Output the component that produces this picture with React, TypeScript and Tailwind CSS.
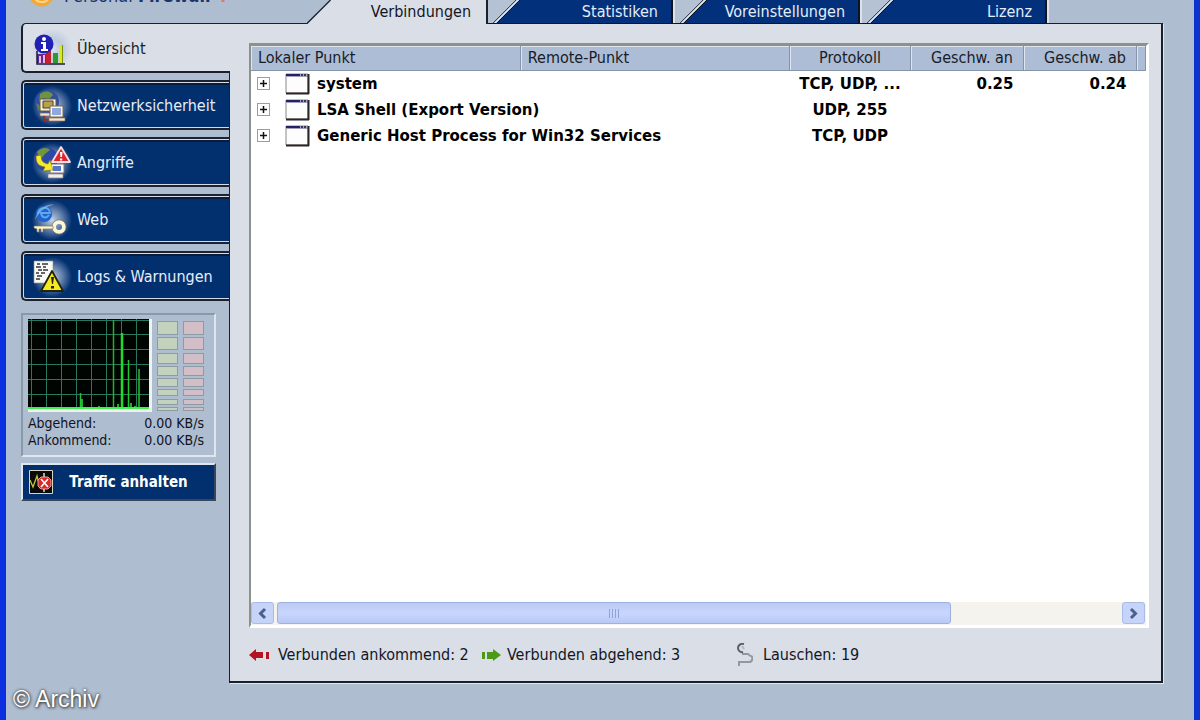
import type { ReactNode } from "react";
import clsx from "clsx";

interface NavItem {
  label: string;
  icon: ReactNode;
}

interface Connection {
  name: string;
  protocol: string;
  speedIn: string;
  speedOut: string;
}

const TABS = ["Statistiken", "Voreinstellungen", "Lizenz"];

const CONNECTIONS: Connection[] = [
  { name: "system", protocol: "TCP, UDP, ...", speedIn: "0.25", speedOut: "0.24" },
  { name: "LSA Shell (Export Version)", protocol: "UDP, 255", speedIn: "", speedOut: "" },
  { name: "Generic Host Process for Win32 Services", protocol: "TCP, UDP", speedIn: "", speedOut: "" },
];

const METER = ["h-[14px]", "h-[13px]", "h-[11px]", "h-[10px]", "h-[9px]", "h-[7px]", "h-[6px]", "h-[4px]"];

function Glow({ id }: { id: string }) {
  return (
    <>
      <defs>
        <radialGradient id={id}>
          <stop offset="0" stopColor="#dfe8f5" stopOpacity="0.9" />
          <stop offset="0.5" stopColor="#a9bbd8" stopOpacity="0.6" />
          <stop offset="1" stopColor="#a9bbd8" stopOpacity="0" />
        </radialGradient>
      </defs>
      <circle cx="21" cy="20" r="20" fill={`url(#${id})`} />
    </>
  );
}

function OverviewIcon() {
  return (
    <svg width="42" height="40" viewBox="0 0 42 40" aria-hidden="true">
      <Glow id="glow-overview" />
      <path d="M6 25h9v9H6z" fill="#5b2a9a" />
      <path d="M8 27h2v7H8zM12 26h2v8h-2z" fill="#e9b8dc" />
      <path d="M15 20h5v14h-5z" fill="#c8202c" />
      <path d="M22 24h5v10h-5z" fill="#2e9a2c" />
      <path d="M28 17l4-1v18h-4z" fill="#d8ea1c" />
      <path d="M31 16h1v18h-1z" fill="#7c8c10" />
      <circle cx="13" cy="15" r="9.500" fill="#2020b4" />
      <circle cx="13" cy="10" r="2" fill="#fff" />
      <path d="M10 13h5v7h2v2h-7v-2h2v-5h-2z" fill="#fff" />
      <path d="M6 22v13h28" fill="none" stroke="#1c1c3c" strokeWidth="1.500" />
    </svg>
  );
}

function NetworkIcon() {
  return (
    <svg width="42" height="40" viewBox="0 0 42 40" aria-hidden="true">
      <Glow id="glow-network" />
      <circle cx="16" cy="16" r="12" fill="#2f4fa4" />
      <path d="M9 8c5-4 11-3 13 1l-4 4-6-1-4 4z" fill="#6f9440" />
      <path d="M5 17l5 3 2 6-5-2z" fill="#5d8244" />
      <path d="M9 13h16v12H9z" fill="#f3eedc" stroke="#6b5a45" />
      <path d="M12 15h10v7H12z" fill="#b7a24c" stroke="#4c4022" />
      <path d="M9 27h10v3H9z" fill="#efe3cf" stroke="#8a6a55" strokeWidth="0.700" />
      <path d="M13 30v4h10" fill="none" stroke="#8c3328" strokeWidth="2" />
      <path d="M19 20h13v11H19z" fill="#fbf6ea" stroke="#77645a" />
      <path d="M21 22h9v7h-9z" fill="#8fa8e0" />
      <path d="M18 32h16v3H18z" fill="#f5e6d4" stroke="#8a6a55" strokeWidth="0.700" />
    </svg>
  );
}

function AttackIcon() {
  return (
    <svg width="42" height="40" viewBox="0 0 42 40" aria-hidden="true">
      <Glow id="glow-attack" />
      <circle cx="15" cy="16" r="12" fill="#2d48a8" />
      <path d="M6 9c4-5 11-5 13-2l-5 4-5 6z" fill="#70953e" />
      <path d="M19 21h14v9H19z" fill="#fbfbfb" stroke="#77727c" />
      <path d="M22 23h8v5h-8z" fill="#5676cc" />
      <path d="M17 31h15v4H17z" fill="#f0ece6" stroke="#8b7f86" strokeWidth="0.700" />
      <path d="M5 13c0 8 3 10 9 11l-2 4 10-1-3-10-2 4c-5-1-7-3-7-9z" fill="#f7ea28" stroke="#7d781b" strokeWidth="0.600" />
      <path d="M30 4l9 15H21z" fill="#dc2630" stroke="#fbdcdf" strokeWidth="1.800" strokeLinejoin="round" />
      <path d="M29 9h2.500l-.5 5h-1.500zM29 15.500h2.200v2H29z" fill="#fff" />
    </svg>
  );
}

function WebIcon() {
  return (
    <svg width="42" height="40" viewBox="0 0 42 40" aria-hidden="true">
      <Glow id="glow-web" />
      <circle cx="13" cy="14" r="8" fill="#1f63cc" />
      <path d="M7 14c0-8 12-8 12-1H10c1 6 6 5 8 2" fill="none" stroke="#5fa8ec" strokeWidth="2" />
      <path d="M4 20C6 9 17 3 23 5c-8 1-14 6-19 15z" fill="#84bdf0" opacity="0.700" />
      <circle cx="28" cy="27" r="5" fill="none" stroke="#fbf6d8" strokeWidth="4" />
      <circle cx="28" cy="27" r="7.200" fill="none" stroke="#7c765c" strokeWidth="0.700" />
      <path d="M3 26h19v3H12v3h-2v-3H8v3H6v-3l-3-1z" fill="#fbf4cf" stroke="#7c765c" strokeWidth="0.700" />
    </svg>
  );
}

function LogsIcon() {
  return (
    <svg width="42" height="40" viewBox="0 0 42 40" aria-hidden="true">
      <Glow id="glow-logs" />
      <path d="M3 4h19v22H3z" fill="#f8f8f4" stroke="#8c8c8c" strokeWidth="0.600" />
      <path d="M6 7h3m2 0h6M5 10h5m2 0h3M7 13h4m1 0h5M5 16h3m2 0h4M6 19h5M5 22h4" stroke="#33343c" strokeWidth="1.300" />
      <path d="M21 14l11 20H10z" fill="#f4ea1e" stroke="#25220a" strokeWidth="1.800" strokeLinejoin="round" />
      <path d="M20 20h3l-1 7h-1zM20 29h3v2.500h-3z" fill="#25220a" />
    </svg>
  );
}

const NAV: NavItem[] = [
  { label: "Netzwerksicherheit", icon: <NetworkIcon /> },
  { label: "Angriffe", icon: <AttackIcon /> },
  { label: "Web", icon: <WebIcon /> },
  { label: "Logs & Warnungen", icon: <LogsIcon /> },
];

function ActiveTab({ label }: { label: string }) {
  return (
    <button type="button" role="tab" aria-selected="true" className="flex h-6 w-[181px] shrink-0 text-[#14161f]">
      <svg width="24" height="24" viewBox="0 0 24 24" aria-hidden="true" className="shrink-0">
        <path d="M0 24L24 0v24z" fill="#d9dee7" />
        <path d="M0 23.500L23.500 0" stroke="#1a1f2c" strokeWidth="1.300" fill="none" />
      </svg>
      <span className="flex h-6 grow items-start justify-end border-r-2 border-[#1a1f2c] bg-[#d9dee7] pr-[15px] leading-6">
        {label}
      </span>
    </button>
  );
}

function Tab({ label }: { label: string }) {
  return (
    <button type="button" role="tab" aria-selected="false" className="flex h-6 w-[187px] shrink-0 text-[#e6edf8]">
      <svg width="32" height="24" viewBox="0 0 32 24" aria-hidden="true" className="shrink-0">
        <path d="M0 0h32v24H0z" fill="#b4c2d3" />
        <path d="M8 24L32 0v24z" fill="#02307a" />
        <path d="M4 24L28 0" stroke="#3b4454" fill="none" />
        <path d="M6 24L30 0" stroke="#e2e8f0" fill="none" />
        <path d="M8 24L32 0" stroke="#0c1526" fill="none" />
        <path d="M0 23.500h32" stroke="#10141e" />
      </svg>
      <span className="flex h-6 grow items-start justify-end border-r-2 border-b border-[#10141e] bg-[#02307a] pr-[13px] leading-6">
        {label}
      </span>
      <span className="h-[23px] w-[2px] bg-[#dce3ec]" />
    </button>
  );
}

function NavButton({ label, icon }: NavItem) {
  return (
    <button
      type="button"
      className="mr-px h-[50px] rounded-l-[5px] border-y-2 border-l-2 border-[#1b2230] bg-[#d3dbe6] py-px pl-px text-left text-[#e6edf8]"
    >
      <span className="flex h-full items-center gap-1 rounded-l-[2px] border-t-2 border-[#0c1a3c] bg-[#02306f] pl-[7px]">
        {icon}
        {label}
      </span>
    </button>
  );
}

function TrafficGraph() {
  return (
    <svg width="121" height="90" viewBox="0 0 121 90" role="img" aria-label="Traffic" className="block bg-[#010502]">
      <path
        d="M3.500 0v90M18.500 0v90M33.500 0v90M48.500 0v90M63.500 0v90M78.500 0v90M93.500 0v90M108.500 0v90M0 1.500h121M0 15.500h121M0 30.500h121M0 45.500h121M0 60.500h121M0 75.500h121"
        stroke="#277860"
      />
      <path d="M85.500 1v88" stroke="#1fb52a" strokeWidth="1.500" />
      <path d="M94 14v75" stroke="#1fdc2c" strokeWidth="2.500" />
      <path d="M100.500 41v48M111 50v39M52.500 74v15" stroke="#23c431" strokeWidth="1.500" />
      <path d="M54 80v9M90 85v4M103 84v5M71 87v2M107 87v2" stroke="#2de33c" strokeWidth="1.500" />
      <path d="M0 89h121" stroke="#3df04c" strokeWidth="2" />
    </svg>
  );
}

function Meter({ color }: { color: string }) {
  return (
    <div className="flex h-[90px] w-[21px] flex-col justify-between">
      {METER.map((height) => (
        <div key={height} className={clsx("border border-[#8e9ba2]", height, color)} />
      ))}
    </div>
  );
}

function TrafficPanel() {
  return (
    <section className="w-[195px] border-2 border-[#dfe5ec] border-t-[#8b98a8] border-l-[#8b98a8] pt-1 pr-[10px] pb-1 pl-[5px] text-[14px] leading-[17px] text-[#10131c]">
      <div className="flex justify-between">
        <div className="border-r-[3px] border-b-[3px] border-[#eef3ee]">
          <TrafficGraph />
        </div>
        <div className="flex gap-[5px] pt-[2px]">
          <Meter color="bg-[#c3d2bd]" />
          <Meter color="bg-[#d2bec6]" />
        </div>
      </div>
      <dl className="pt-[3px] pb-[2px]">
        <div className="flex justify-between">
          <dt>Abgehend:</dt>
          <dd>0.00 KB/s</dd>
        </div>
        <div className="flex justify-between">
          <dt>Ankommend:</dt>
          <dd>0.00 KB/s</dd>
        </div>
      </dl>
    </section>
  );
}

function StopTrafficButton() {
  return (
    <button
      type="button"
      className="mt-[6px] flex h-[38px] w-[195px] items-center border-2 border-[#dfe6ef] border-r-[#3a465a] border-b-[#3a465a] bg-[#02306f] pl-[6px] text-[15px] font-bold text-white"
    >
      <svg width="24" height="24" viewBox="0 0 24 24" aria-hidden="true" className="shrink-0">
        <path d="M.5.5h23v23H.5z" fill="#0a0a08" stroke="#d8d4c4" />
        <path d="M1 10l3 7 4-11 3 11 2-5" fill="none" stroke="#c6c63a" strokeWidth="1.300" />
        <path d="M15 3v19" stroke="#f0d8c8" strokeWidth="1.500" />
        <path d="M12 7h7l3 3v6l-3 3h-7l-3-3v-6z" fill="#d62a2a" stroke="#f4c8c0" strokeWidth="0.800" />
        <path d="M12 9l7 8m0-8l-7 8" stroke="#fff" strokeWidth="1.600" />
      </svg>
      <span className="grow pr-[10px] text-center">Traffic anhalten</span>
    </button>
  );
}

function WindowIcon() {
  return (
    <svg width="25" height="22" viewBox="0 0 25 22" aria-hidden="true" className="block">
      <path d="M1 1h22v19H1z" fill="#fdfdfd" stroke="#8c8684" />
      <path d="M1 1h22v3H1z" fill="#a4a1bc" />
      <path d="M1 1h14v2H1z" fill="#232268" />
      <path d="M16 1h2v2h-2zM19 1h2v2h-2z" fill="#3a3850" />
      <path d="M1 20.500h23M23.500 1v20" stroke="#2a2528" strokeWidth="2" />
    </svg>
  );
}

function ExpandButton({ name }: { name: string }) {
  return (
    <button type="button" aria-label={`${name} erweitern`} className="flex size-[13px] shrink-0 items-center justify-center border border-[#98a09c] bg-white">
      <svg width="9" height="9" viewBox="0 0 9 9" aria-hidden="true">
        <path d="M1 4.500h7M4.500 1v7" stroke="#111" strokeWidth="1.500" />
      </svg>
    </button>
  );
}

function ConnectionTable() {
  const head = "h-6 border-r border-b border-[#8594a6] bg-[#adbdd5] p-0 pt-px font-normal shadow-[inset_1px_1px_0_#dfe6f0]";
  return (
    <table className="w-full table-fixed border-collapse text-black">
      <colgroup>
        <col />
        <col />
        <col className="w-[121px]" />
        <col className="w-[113px]" />
        <col className="w-[113px]" />
        <col className="w-[9px]" />
      </colgroup>
      <thead className="text-[#181c28]">
        <tr>
          <th className={clsx(head, "text-left")}><span className="pl-[7px]">Lokaler Punkt</span></th>
          <th className={clsx(head, "text-left")}><span className="pl-[7px]">Remote-Punkt</span></th>
          <th className={clsx(head, "text-center")}>Protokoll</th>
          <th className={clsx(head, "text-right")}><span className="pr-[10px]">Geschw. an</span></th>
          <th className={clsx(head, "text-right")}><span className="pr-[10px]">Geschw. ab</span></th>
          <th className={head} />
        </tr>
      </thead>
      <tbody className="font-['DejaVu_Sans',sans-serif] text-[15px] font-bold">
        {CONNECTIONS.map((row) => (
          <tr key={row.name} className="h-[26px] whitespace-nowrap">
            <td colSpan={2} className="p-0">
              <div className="flex h-[26px] items-center pl-[6px]">
                <ExpandButton name={row.name} />
                <span className="pr-[7px] pl-[15px]">
                  <WindowIcon />
                </span>
                {row.name}
              </div>
            </td>
            <td className="p-0 text-center">{row.protocol}</td>
            <td className="p-0 pr-[10px] text-right">{row.speedIn}</td>
            <td className="p-0 pr-[10px] text-right">{row.speedOut}</td>
            <td className="p-0" />
          </tr>
        ))}
      </tbody>
    </table>
  );
}

function ScrollButton({ label, path }: { label: string; path: string }) {
  return (
    <button
      type="button"
      aria-label={label}
      className="flex h-[22px] w-[23px] shrink-0 items-center justify-center rounded-[3px] border border-[#a9bbe6] bg-[#c6d4fa]"
    >
      <svg width="11" height="13" viewBox="0 0 11 13" aria-hidden="true">
        <path d={path} fill="none" stroke="#4a5f8e" strokeWidth="3" />
      </svg>
    </button>
  );
}

function ScrollBar() {
  return (
    <div className="flex items-center bg-[#f4f3ee] pr-px pb-px">
      <ScrollButton label="Nach links" path="M8 2L3.500 6.500 8 11" />
      <div className="flex grow px-[3px]">
        <div className="flex h-[22px] w-[80%] items-center justify-center gap-[2px] rounded-[3px] border border-[#9db0e0] bg-linear-to-b from-[#bccaf4] via-[#c8d6ff] to-[#b9c9f4]">
          {[0, 1, 2, 3].map((n) => (
            <span key={n} className="h-[9px] w-px bg-[#8fa3d8]" />
          ))}
        </div>
      </div>
      <ScrollButton label="Nach rechts" path="M3 2l4.500 4.500L3 11" />
    </div>
  );
}

function StatusLine() {
  return (
    <footer className="flex h-[53px] items-center text-[#14161f]">
      <div className="flex w-[232px] items-center gap-[7px]">
        <svg width="22" height="14" viewBox="0 0 22 14" aria-hidden="true">
          <path d="M0 7l7-6v3h7v6H7v3z" fill="#b41420" />
          <path d="M17 4h3v7h-3z" fill="#b41420" />
        </svg>
        Verbunden ankommend: 2
      </div>
      <div className="flex w-[256px] items-center gap-[6px]">
        <svg width="20" height="14" viewBox="0 0 20 14" aria-hidden="true">
          <path d="M20 7l-8-6v3H6v7h6v2z" fill="#4d9a18" />
          <path d="M1 4h3v7H1z" fill="#4d9a18" />
        </svg>
        Verbunden abgehend: 3
      </div>
      <div className="flex items-center gap-[10px]">
        <svg width="16" height="24" viewBox="0 0 16 24" aria-hidden="true">
          <path d="M7 1C3 0 1 3 1 5s2 5 5 4" fill="none" stroke="#5c6066" strokeWidth="2" />
          <path d="M5 3l2 3" stroke="#b5b8bc" strokeWidth="2" />
          <path d="M5 11h6c1 0 1 2 3 2s2 6-2 6H2v4" fill="none" stroke="#94989e" strokeWidth="2" />
        </svg>
        Lauschen: 19
      </div>
    </footer>
  );
}

export default function App() {
  return (
    <div className="relative flex min-h-screen flex-col border-x-[6px] border-r-[#0a34cc] border-l-[#0a2ee0] bg-[#aebdcf] pr-[31px] pb-[37px] pl-[15px] font-['DejaVu_Sans_Condensed','DejaVu_Sans',sans-serif] text-[16px] leading-5">
      <header className="relative z-10 -mb-px flex h-6 overflow-hidden">
        <div className="-mt-[16px] flex w-[286px] shrink-0 items-start gap-[9px] pl-[7px] text-[18px] leading-6 text-[#1c3468]">
          <svg width="27" height="24" viewBox="0 0 27 24" aria-hidden="true">
            <circle cx="13.500" cy="10" r="12.500" fill="#f3a832" />
            <path d="M6 12c2 8 13 8 15 1" fill="none" stroke="#fbd68c" strokeWidth="2" />
          </svg>
          <div>
            Personal <b>Firewall</b> <b className="text-[#dc7a5a]">4</b>
          </div>
        </div>
        <div role="tablist" className="flex min-w-0">
          <ActiveTab label="Verbindungen" />
          {TABS.map((label) => (
            <Tab key={label} label={label} />
          ))}
        </div>
      </header>

      <div className="flex grow">
        <aside className="relative z-10 -mr-px flex w-[209px] shrink-0 flex-col">
          <nav className="flex flex-col gap-[7px]">
            <button
              type="button"
              aria-current="page"
              className="flex h-[50px] items-center gap-1 rounded-l-[5px] border-t border-b-2 border-l-2 border-[#1a1f2c] bg-[#d9dee7] pt-[2px] pl-2 text-left text-[#181c28]"
            >
              <OverviewIcon />
              Übersicht
            </button>
            {NAV.map((item) => (
              <NavButton key={item.label} {...item} />
            ))}
          </nav>
          <div className="pt-3">
            <TrafficPanel />
            <StopTrafficButton />
          </div>
        </aside>

        <main className="flex min-w-0 grow flex-col border border-r-2 border-b-2 border-[#1a1f2c] bg-[#d9dee7] pt-[19px] pr-3 pl-[19px] shadow-[1px_1px_0_#dfe6ec]">
          <div className="flex grow flex-col justify-between border-t-[3px] border-r-[3px] border-b-[3px] border-l-2 border-white border-t-[#8c918c] border-l-[#8c918c] bg-white">
            <ConnectionTable />
            <ScrollBar />
          </div>
          <StatusLine />
        </main>
      </div>

      <div className="absolute bottom-[9px] left-[7px] font-['Liberation_Sans',sans-serif] text-[23px] leading-6 text-white [text-shadow:0_0_3px_#333,1px_1px_3px_#444]">
        © Archiv
      </div>
    </div>
  );
}
